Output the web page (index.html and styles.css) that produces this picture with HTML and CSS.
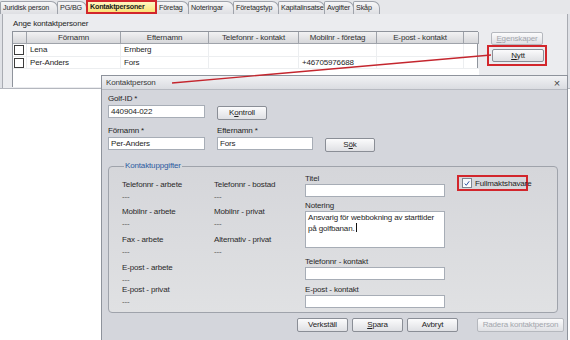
FILE: index.html
```html
<!DOCTYPE html>
<html>
<head>
<meta charset="utf-8">
<link rel="stylesheet" href="styles.css">
</head>
<body>
<div class="screen">
  <div class="app">
    <div class="tabs">
      <div class="tab">Juridisk person</div>
      <div class="tab">PG/BG</div>
      <div class="tab tab-active">Kontaktpersoner</div>
      <div class="tab">Företag</div>
      <div class="tab">Noteringar</div>
      <div class="tab">Företagstyp</div>
      <div class="tab">Kapitalinsatser</div>
      <div class="tab">Avgifter</div>
      <div class="tab">Skåp</div>
    </div>
    <div class="panel">
      <div class="panel-title">Ange kontaktpersoner</div>
      <div class="panel-body">
        <div class="grid">
          <div class="gh"></div>
          <div class="gh">Förnamn</div>
          <div class="gh">Efternamn</div>
          <div class="gh">Telefonnr - kontakt</div>
          <div class="gh">Mobilnr - företag</div>
          <div class="gh">E-post - kontakt</div>
          <div class="gh"></div>

          <div class="gc"><span class="cb"></span></div>
          <div class="gc">Lena</div>
          <div class="gc">Ernberg</div>
          <div class="gc"></div>
          <div class="gc"></div>
          <div class="gc"></div>
          <div class="gc gc-empty"></div>

          <div class="gc"><span class="cb"></span></div>
          <div class="gc">Per-Anders</div>
          <div class="gc">Fors</div>
          <div class="gc"></div>
          <div class="gc">+46705976688</div>
          <div class="gc"></div>
          <div class="gc gc-empty"></div>

          <div class="gfill"></div>
        </div>
        <div class="side">
          <div class="btn btn-disabled side-btn"><u>E</u>genskaper</div>
          <div class="mark">
            <div class="btn side-btn"><u>N</u>ytt</div>
          </div>
        </div>
      </div>
    </div>
  </div>

  <div class="dialog">
    <div class="titlebar">
      <span class="title">Kontaktperson</span>
      <span class="close">×</span>
    </div>
    <div class="dbody">
      <div class="form">
        <div class="lbl">Golf-ID *</div>
        <div></div>
        <div></div>
        <div class="inp">440904-022</div>
        <div class="btn btn-form">K<u>o</u>ntroll</div>
        <div></div>
        <div class="lbl lbl-end">Förnamn *</div>
        <div class="lbl lbl-end">Efternamn *</div>
        <div></div>
        <div class="inp">Per-Anders</div>
        <div class="inp">Fors</div>
        <div class="btn btn-form">S<u>ö</u>k</div>
      </div>

      <fieldset class="group">
        <legend class="legend">Kontaktuppgifter</legend>
        <div class="gcols">
          <div class="col col-info">
            <div class="fld"><div class="fl">Telefonnr - arbete</div><div class="fv">---</div></div>
            <div class="fld fld-b"><div class="fl">Mobilnr - arbete</div><div class="fv">---</div></div>
            <div class="fld fld-c"><div class="fl">Fax - arbete</div><div class="fv">---</div></div>
            <div class="fld fld-c"><div class="fl">E-post - arbete</div><div class="fv">---</div></div>
            <div class="fld fld-d"><div class="fl">E-post - privat</div><div class="fv">---</div></div>
          </div>
          <div class="col col-info">
            <div class="fld"><div class="fl">Telefonnr - bostad</div><div class="fv">---</div></div>
            <div class="fld fld-b"><div class="fl">Mobilnr - privat</div><div class="fv">---</div></div>
            <div class="fld fld-c"><div class="fl">Alternativ - privat</div><div class="fv">---</div></div>
          </div>
          <div class="col col-edit">
            <div class="el">Titel</div>
            <div class="inp inp-wide"></div>
            <div class="el el-gap">Notering</div>
            <div class="inp inp-wide area">Ansvarig för webbokning av starttider<br>på golfbanan.<span class="caret"></span></div>
            <div class="el el-gap2">Telefonnr - kontakt</div>
            <div class="inp inp-wide"></div>
            <div class="el el-gap3">E-post - kontakt</div>
            <div class="inp inp-wide"></div>
          </div>
          <div class="col">
            <div class="chkmark">
              <span class="chk">
                <svg width="9" height="9" viewBox="0 0 9 9"><path d="M2 4.6 L3.7 6.5 L7 2" fill="none" stroke="#2a4f9c" stroke-width="1.1"/></svg>
              </span>
              <span>Fullmaktshavare</span>
            </div>
          </div>
        </div>
      </fieldset>

      <div class="actions">
        <div class="btn btn-act">Verkställ</div>
        <div class="btn btn-act"><u>S</u>para</div>
        <div class="btn btn-act">Avbryt</div>
        <div class="btn btn-act btn-disabled btn-radera">Radera kontaktperson</div>
      </div>
    </div>
  </div>

  <svg class="connector" width="570" height="340" viewBox="0 0 570 340">
    <line x1="172" y1="83" x2="491" y2="55" stroke="#c4262e" stroke-width="1.4"/>
  </svg>
</div>
</body>
</html>
```

FILE: styles.css
```css
* { box-sizing: border-box; }

html, body {
  margin: 0;
  padding: 0;
  background: #ffffff;
}

body {
  font-family: "Liberation Sans", Arial, sans-serif;
  font-size: 8px;
  letter-spacing: -0.15px;
  color: #1e1e1e;
}

.screen {
  position: relative;
  width: 570px;
  height: 340px;
  overflow: hidden;
  background: #ffffff;
}

/* ---------- background window ---------- */
.app {
  width: 570px;
  height: 89px;
  background: #dfe1e6;
  border-bottom: 1px solid #b4b7be;
}

.tabs {
  display: flex;
  height: 14px;
  background: #e6e7ea;
  align-items: flex-end;
  font-size: 7.2px;
  letter-spacing: -0.15px;
}

.tab {
  flex: none;
  height: 13px;
  line-height: 12px;
  padding-left: 2px;
  border: 1px solid #9fa3ab;
  border-bottom: none;
  border-radius: 2px 7px 0 0;
  background: linear-gradient(#f6f6f7, #dedfe3);
  color: #2a2a2a;
  margin-right: -1px;
  white-space: nowrap;
  overflow: hidden;
}
.tab:nth-child(1) { width: 58px; }
.tab:nth-child(2) { width: 30px; }
.tab:nth-child(3) { width: 71px; }
.tab:nth-child(4) { width: 33px; }
.tab:nth-child(5) { width: 46px; }
.tab:nth-child(6) { width: 46px; }
.tab:nth-child(7) { width: 47px; }
.tab:nth-child(8) { width: 30px; }
.tab:nth-child(9) { width: 27px; }

.tab-active {
  height: 14px;
  font-weight: bold;
  background: linear-gradient(#fff7c4, #fbe277);
  border: 2px solid #d2262c;
  border-radius: 0;
  line-height: 10px;
  color: #1a1a1a;
  position: relative;
  z-index: 1;
  padding-left: 2px;
  letter-spacing: -0.2px;
}

.panel {
  height: 74px;
  margin-left: 2px;
  margin-right: 2px;
  background: #ebecef;
  border-left: 1px solid #a8abb2;
  border-right: 1px solid #a8abb2;
}

.panel-title {
  padding: 5px 0 0 10px;
  height: 17px;
  line-height: 10px;
}

.panel-body {
  display: flex;
  padding-left: 9px;
}

.grid {
  display: grid;
  grid-template-columns: 14px 94px 88px 90px 78px 87px 15px;
  grid-template-rows: 12px 13px 12px 18px;
  width: 466px;
  border: 1px solid #8f949c;
  border-bottom: none;
  background: #ffffff;
}

.gh {
  background: linear-gradient(#f2f2f3, #d6d7da);
  border-right: 1px solid #9fa3aa;
  border-bottom: 1px solid #9fa3aa;
  text-align: center;
  line-height: 11px;
  color: #333;
  white-space: nowrap;
}

.gc {
  border-right: 1px solid #eceef0;
  border-bottom: 1px solid #eceef0;
  line-height: 12px;
  padding-left: 3px;
  white-space: nowrap;
}
.gc:nth-child(7n+1) { padding-left: 1px; }
.gc-empty { border-right: none; }

.gfill { grid-column: 1 / span 7; background: #ffffff; }

.cb {
  display: block;
  width: 10px;
  height: 10px;
  margin-top: 1px;
  border: 1px solid #3c3c3c;
  background: #ffffff;
}

.side {
  margin-left: 13px;
  display: flex;
  flex-direction: column;
  padding-top: 1px;
}

.side-btn {
  width: 52px;
  height: 13px;
  line-height: 11px;
}

.mark {
  margin-top: 1px;
  margin-left: -3px;
  padding: 2px 3px;
  border: 2px solid #d2262c;
  width: 60px;
  position: relative;
  left: -1px;
  top: -1px;
}

/* ---------- buttons ---------- */
.btn {
  border: 1px solid #8a8e96;
  border-radius: 2px;
  background: linear-gradient(#fbfbfc, #dfe0e4);
  text-align: center;
  color: #1e1e1e;
  white-space: nowrap;
}
.btn-disabled {
  color: #a3a6ad;
  border-color: #b5b8be;
}

/* ---------- dialog ---------- */
.dialog {
  position: absolute;
  left: 101px;
  top: 75px;
  width: 467px;
  height: 267px;
  background: #d4d6dc;
  border: 1px solid #8e939c;
  z-index: 2;
}

.titlebar {
  display: flex;
  justify-content: space-between;
  align-items: center;
  height: 14px;
  padding: 0 7px 0 4px;
  background: linear-gradient(#f1f2f4, #dadce1);
  border-bottom: 1px solid #b7bac1;
  color: #3a3a3a;
}
.close { font-size: 11px; color: #444; line-height: 10px; }

.dbody {
  padding: 4px 0 0 6px;
}

.form {
  display: grid;
  grid-template-columns: 97px 96px 50px;
  grid-template-rows: 10px 14px 18px 14px;
  column-gap: 12px;
}

.lbl {
  line-height: 10px;
  height: 10px;
}
.lbl-end { align-self: end; }

.inp {
  height: 13px;
  margin-top: 1px;
  background: #ffffff;
  border: 1px solid #a7adb6;
  line-height: 11px;
  padding-left: 2px;
  white-space: nowrap;
}

.btn-form {
  width: 50px;
  height: 14px;
  margin-top: 2px;
  line-height: 12px;
}

.group {
  margin: 11px 0 0 0;
  padding: 0 0 0 13px;
  width: 450px;
  height: 152px;
  border: 1px solid #9fa3ab;
  border-radius: 4px;
  background: linear-gradient(#d5d6da, #e0e1e3);
  min-inline-size: 0;
}

.legend {
  padding: 0 1px;
  margin-left: 2px;
  line-height: 10px;
  color: #2c5aa0;
}

.gcols {
  display: grid;
  grid-template-columns: 92px 91px 140px 71px;
}
.gcols > .col:nth-child(4) { margin-left: 12px; }

.col-info { padding-top: 8px; }

.fld .fl { line-height: 12px; height: 12px; color: #2a2a2a; }
.fld .fv { line-height: 12px; height: 12px; color: #555; }
.fld-b { margin-top: 3px; }
.fld-c { margin-top: 4px; }
.fld-d { margin-top: -2px; }

.col-edit { padding-top: 3px; }

.el { line-height: 10px; height: 10px; color: #2a2a2a; }
.el-gap { margin-top: 4px; }
.el-gap2 { margin-top: 9px; }
.el-gap3 { margin-top: 5px; }

.inp-wide { width: 140px; margin-top: 0; }

.area {
  height: 37px;
  line-height: 10px;
  padding-top: 1px;
  white-space: normal;
}

.caret {
  display: inline-block;
  width: 1px;
  height: 9px;
  background: #111;
  vertical-align: -1px;
  margin-left: 1px;
}

.chkmark {
  display: flex;
  align-items: center;
  width: 71px;
  height: 16px;
  margin-top: 4px;
  padding-left: 3px;
  border: 2px solid #d2262c;
  white-space: nowrap;
}

.chk {
  display: flex;
  width: 10px;
  height: 10px;
  margin-right: 3px;
  border: 1px solid #7d8590;
  background: linear-gradient(#f4f6fa, #ffffff);
}
.chk svg { display: block; }

.actions {
  display: flex;
  margin-top: 5px;
  padding-left: 189px;
  gap: 4px;
}

.btn-act {
  width: 51px;
  height: 14px;
  line-height: 12px;
}
.btn-radera {
  width: 87px;
  margin-left: 15px;
}

.connector {
  position: absolute;
  left: 0;
  top: 0;
  z-index: 3;
  pointer-events: none;
}
```
